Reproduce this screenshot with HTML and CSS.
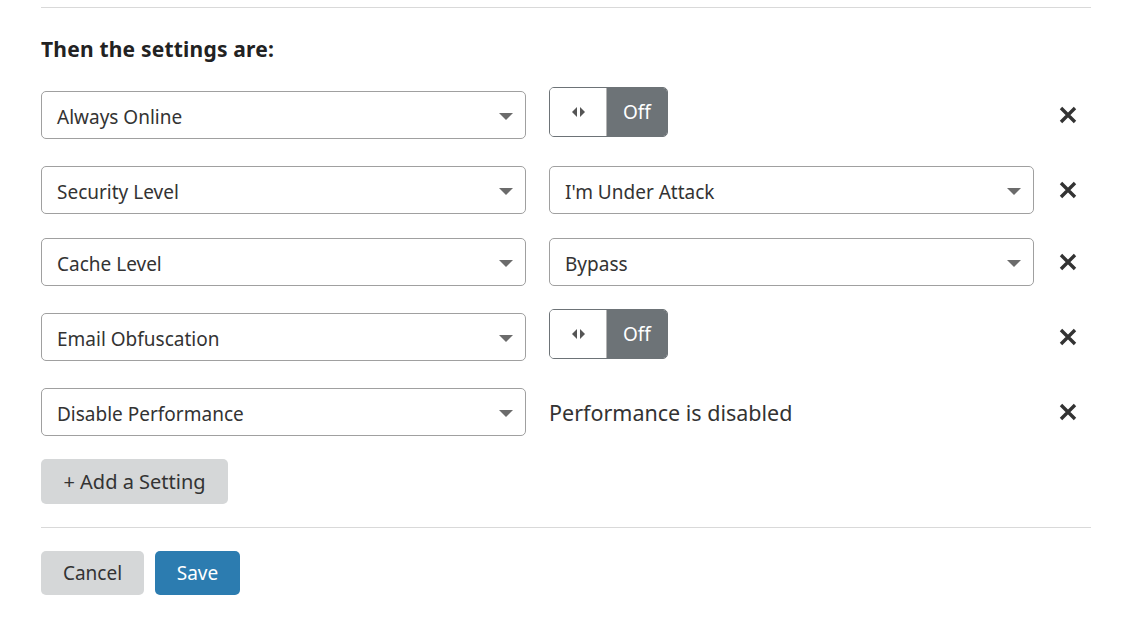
FILE: index.html
```html
<!DOCTYPE html>
<html>
<head>
<meta charset="utf-8">
<link rel="stylesheet" href="styles.css">
</head>
<body>
<div class="page">
  <hr class="rule top-rule">
  <h2 class="heading">Then the settings are:</h2>

  <div class="row row-toggle row-first">
    <div class="select"><span>Always Online</span><i class="caret"></i></div>
    <div class="value"><div class="toggle"><div class="knob"><span class="arr-l"></span><span class="arr-r"></span></div><div class="state">Off</div></div></div>
    <div class="remove"><svg width="18" height="18" viewBox="0 0 18 18"><path d="M2 2 L16 16 M16 2 L2 16" stroke="#333" stroke-width="3.4"/></svg></div>
  </div>

  <div class="row">
    <div class="select"><span>Security Level</span><i class="caret"></i></div>
    <div class="value"><div class="select"><span>I'm Under Attack</span><i class="caret"></i></div></div>
    <div class="remove"><svg width="18" height="18" viewBox="0 0 18 18"><path d="M2 2 L16 16 M16 2 L2 16" stroke="#333" stroke-width="3.4"/></svg></div>
  </div>

  <div class="row row-tight">
    <div class="select"><span>Cache Level</span><i class="caret"></i></div>
    <div class="value"><div class="select"><span>Bypass</span><i class="caret"></i></div></div>
    <div class="remove"><svg width="18" height="18" viewBox="0 0 18 18"><path d="M2 2 L16 16 M16 2 L2 16" stroke="#333" stroke-width="3.4"/></svg></div>
  </div>

  <div class="row row-toggle">
    <div class="select"><span>Email Obfuscation</span><i class="caret"></i></div>
    <div class="value"><div class="toggle"><div class="knob"><span class="arr-l"></span><span class="arr-r"></span></div><div class="state">Off</div></div></div>
    <div class="remove"><svg width="18" height="18" viewBox="0 0 18 18"><path d="M2 2 L16 16 M16 2 L2 16" stroke="#333" stroke-width="3.4"/></svg></div>
  </div>

  <div class="row">
    <div class="select"><span>Disable Performance</span><i class="caret"></i></div>
    <div class="value"><span class="plain">Performance is disabled</span></div>
    <div class="remove"><svg width="18" height="18" viewBox="0 0 18 18"><path d="M2 2 L16 16 M16 2 L2 16" stroke="#333" stroke-width="3.4"/></svg></div>
  </div>

  <button class="btn btn-gray add-btn">+ Add a Setting</button>

  <hr class="rule bottom-rule">

  <div class="actions">
    <button class="btn btn-gray">Cancel</button>
    <button class="btn btn-blue">Save</button>
  </div>
</div>
</body>
</html>
```
FILE: styles.css
```css
html, body {
  margin: 0;
  padding: 0;
  background: #fff;
}
body {
  font-family: "Noto Sans", "Open Sans", sans-serif;
  color: #333;
}
.page {
  width: 1050px;
  margin-left: 41px;
}
.rule {
  border: 0;
  border-top: 1px solid #d9d9d9;
  margin: 0;
  height: 0;
}
.top-rule {
  margin-top: 7px;
}
.heading {
  font-size: 21px;
  letter-spacing: 0.2px;
  font-weight: 700;
  margin: 26px 0 0 0;
  line-height: 30px;
  color: #222;
}
.row {
  display: flex;
  align-items: center;
  margin-top: 27px;
  height: 48px;
}
.row-first {
  margin-top: 27px;
}
.row-tight {
  margin-top: 24px;
}
.select {
  box-sizing: border-box;
  width: 485px;
  height: 48px;
  border: 1px solid #a0a0a0;
  border-radius: 5px;
  display: flex;
  align-items: center;
  justify-content: space-between;
  padding: 3px 12px 0 15px;
  font-size: 19px;
  color: #333;
  background: #fff;
}
.caret {
  width: 0;
  height: 0;
  border-left: 7px solid transparent;
  border-right: 7px solid transparent;
  border-top: 7px solid #6b6b6b;
}
.value {
  width: 485px;
  margin-left: 23px;
  display: flex;
  align-items: center;
}
.plain {
  font-size: 21.5px;
  color: #333;
}
.row-toggle .value {
  margin-top: -6px;
}
.toggle {
  display: flex;
  height: 50px;
  width: 119px;
  box-sizing: border-box;
  border: 1px solid #6d7377;
  border-radius: 5px;
  overflow: hidden;
}
.knob {
  box-sizing: border-box;
  width: 58px;
  background: #fff;
  border: 1px solid #b3b3b3;
  border-radius: 4px 0 0 4px;
  margin: -1px 0 -1px -1px;
  height: 50px;
  display: flex;
  align-items: center;
  justify-content: center;
  gap: 3px;
}
.arr-l, .arr-r {
  width: 0;
  height: 0;
  border-top: 5px solid transparent;
  border-bottom: 5px solid transparent;
}
.arr-l { border-right: 5px solid #555; }
.arr-r { border-left: 5px solid #555; }
.state {
  flex: 1;
  background: #6d7377;
  color: #fff;
  font-size: 19px;
  display: flex;
  align-items: center;
  justify-content: center;
}
.remove {
  margin-left: 18px;
  width: 32px;
  display: flex;
  justify-content: center;
  align-items: center;
}
.btn {
  font-family: "Noto Sans", "Open Sans", sans-serif;
  border: 0;
  border-radius: 5px;
  height: 45px;
  font-size: 19px;
  padding: 0 22px;
  color: #333;
  cursor: pointer;
}
.btn-gray {
  background: #d5d7d8;
}
.btn-blue {
  background: #2c7cb0;
  color: #fff;
}
.add-btn {
  margin-top: 23px;
  display: block;
  width: 187px;
  padding: 0;
  font-size: 20px;
}
.bottom-rule {
  margin-top: 23px;
}
.actions {
  margin-top: 23px;
  display: flex;
  gap: 11px;
}
.actions .btn-gray { width: 103px; padding: 0; height: 44px; }
.actions .btn-blue { width: 85px; padding: 0; height: 44px; }
```
